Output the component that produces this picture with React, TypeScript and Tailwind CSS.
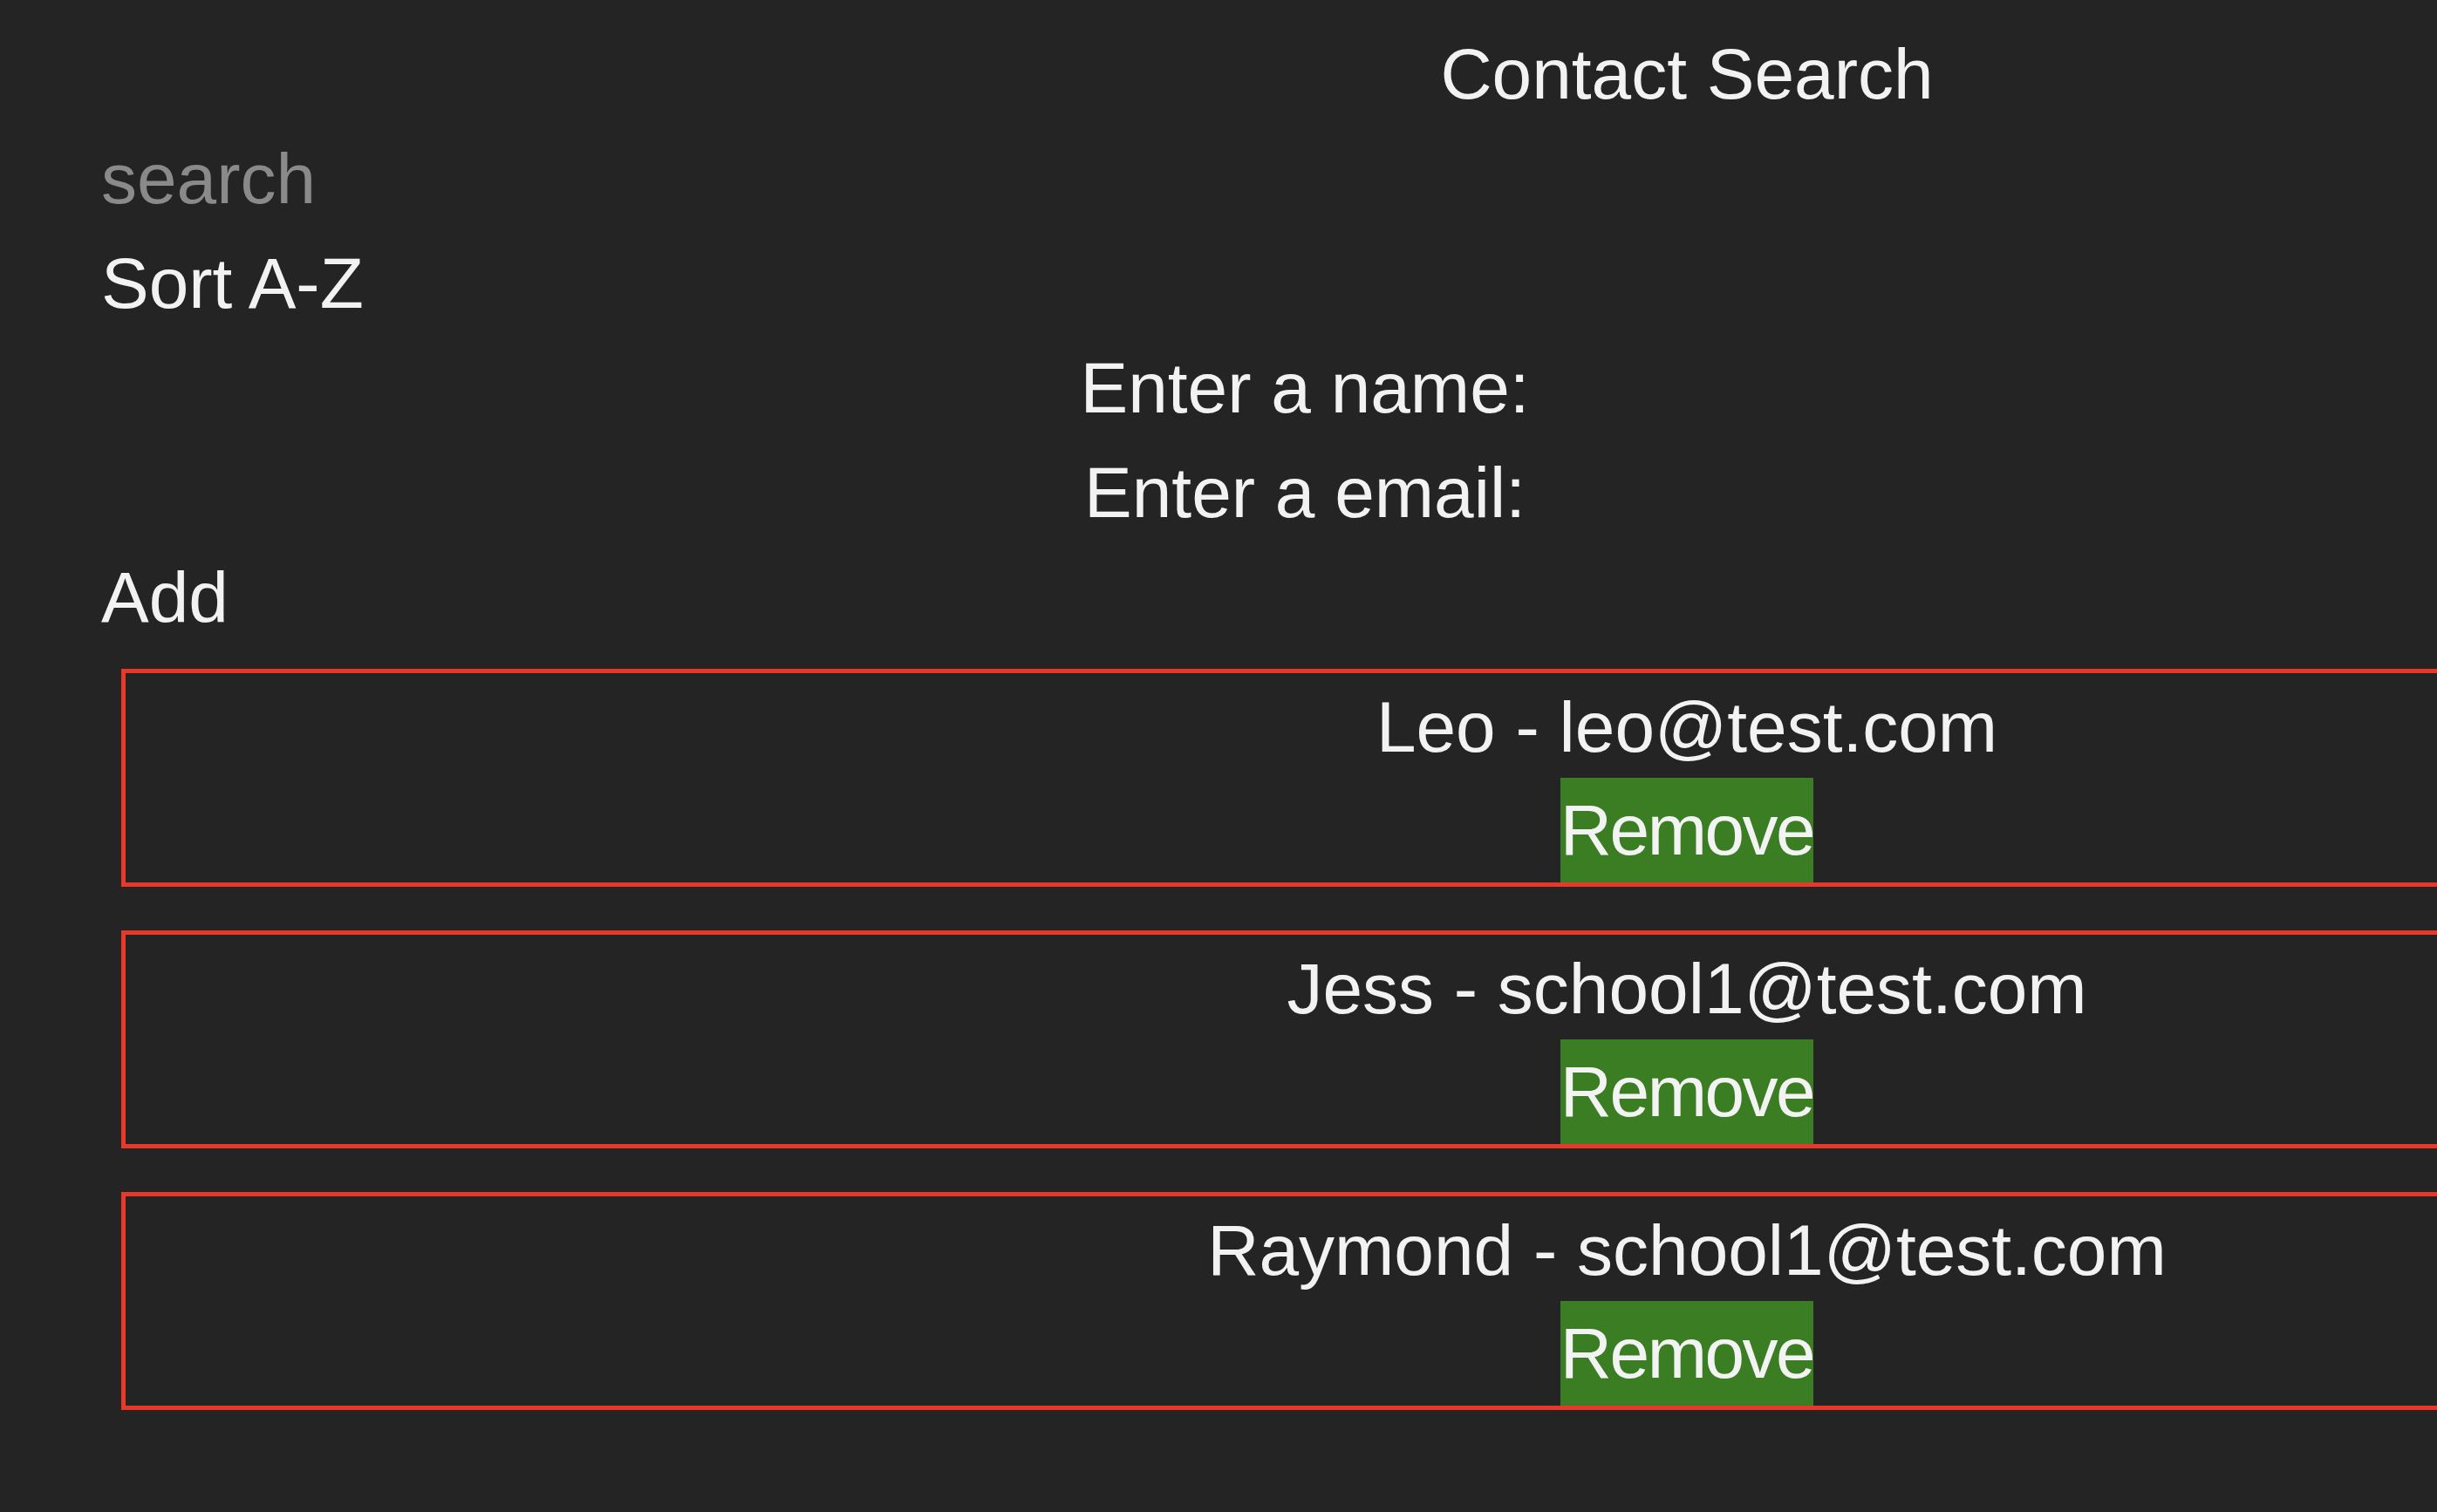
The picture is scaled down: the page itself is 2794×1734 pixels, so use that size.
import React from "react";

const contacts = [
  { name: "Leo", email: "leo@test.com" },
  { name: "Jess", email: "school1@test.com" },
  { name: "Raymond", email: "school1@test.com" },
];

export default function App() {
  return (
    <div
      className="w-[2794px] h-[1734px] overflow-hidden bg-[#242424] text-[#f2f2f2]"
      style={{ fontFamily: '"Liberation Sans", Arial, sans-serif' }}
    >
      <div className="w-[3752px] pl-[116px] pt-[25px] text-[82px] leading-[120px] flex flex-col">
        <h1 className="text-center text-[82px] leading-[120px] font-normal">Contact Search</h1>
        <input
          className="h-[120px] w-[800px] bg-transparent outline-none text-[82px] leading-[120px] text-[#f2f2f2] placeholder:text-[#8a8a8a] p-0 border-0"
          placeholder="search"
        />
        <div>
          <button className="bg-transparent p-0 text-[82px] leading-[120px] text-[#f2f2f2]">Sort A-Z</button>
        </div>
        <div className="flex justify-center items-center h-[120px]">
          <label className="whitespace-nowrap">Enter a name:</label>
          <span className="w-[876px] shrink-0" />
        </div>
        <div className="flex justify-center items-center h-[120px]">
          <label className="whitespace-nowrap">Enter a email:</label>
          <span className="w-[876px] shrink-0" />
        </div>
        <div>
          <button className="bg-transparent p-0 text-[82px] leading-[120px] text-[#f2f2f2]">Add</button>
        </div>
        <div className="flex flex-col gap-[50px] mt-[22px] mx-[23px]">
          {contacts.map((c, i) => (
            <div key={i} className="border-[5px] border-[#e8382a] flex flex-col items-center h-[250px]">
              <div className="h-[120px] pt-[3px] leading-[117px] whitespace-nowrap">
                {c.name} - {c.email}
              </div>
              <button className="bg-[#3a7d23] text-[#f3f3f3] h-[120px] w-[290px] leading-[120px] text-[82px] tracking-[-2.5px] p-0 whitespace-nowrap flex justify-center">
                Remove
              </button>
            </div>
          ))}
        </div>
      </div>
    </div>
  );
}
